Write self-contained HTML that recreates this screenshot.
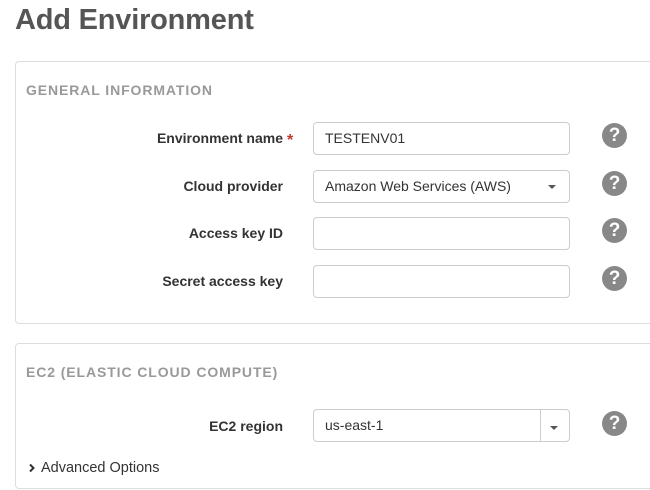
<!DOCTYPE html>
<html><head><style>
body{margin:0;width:650px;height:490px;background:#fff;font-family:"Liberation Sans",Arial,sans-serif;position:relative;overflow:hidden;color:#333}
.abs{position:absolute}
h1{position:absolute;left:15px;top:4px;margin:0;font-size:29px;font-weight:bold;color:#555;letter-spacing:-0.2px}
.panel{position:absolute;left:15px;width:660px;border:1px solid #ddd;border-radius:4px;background:#fff}
.hd{position:absolute;left:26px;font-size:14px;font-weight:bold;color:#999;letter-spacing:0.9px}
.lbl{position:absolute;right:367px;font-size:14px;font-weight:bold;color:#333;text-align:right;white-space:nowrap}
.inp{position:absolute;left:313px;width:255px;height:31px;border:1px solid #ccc;border-radius:4px;font-size:14px;line-height:31px;box-sizing:content-box;text-indent:11px;color:#333}
.help{position:absolute;left:602px;width:25px;height:25px;border-radius:50%;background:#888;color:#fff;font-weight:bold;font-size:19px;line-height:25px;text-align:center}
.caret{position:absolute;width:0;height:0;border-left:4px solid transparent;border-right:4px solid transparent;border-top:4px solid #555}
</style></head><body>
<h1>Add Environment</h1>
<div class="panel" style="top:61px;height:261px"></div>
<div class="hd" style="top:82px">GENERAL INFORMATION</div>

<div class="lbl" style="top:130px">Environment name</div>
<div class="abs" style="left:287px;top:132px;color:#c0392b;font-size:16px;font-weight:bold">*</div>
<div class="inp" style="top:122px">TESTENV01</div>
<div class="help" style="top:123px">?</div>

<div class="lbl" style="top:178px">Cloud provider</div>
<div class="inp" style="top:170px">Amazon Web Services (AWS)</div>
<div class="caret" style="left:548px;top:185px"></div>
<div class="help" style="top:171px">?</div>

<div class="lbl" style="top:225px">Access key ID</div>
<div class="inp" style="top:217px"></div>
<div class="help" style="top:218px">?</div>

<div class="lbl" style="top:273px">Secret access key</div>
<div class="inp" style="top:265px"></div>
<div class="help" style="top:266px">?</div>

<div class="panel" style="top:343px;height:144px"></div>
<div class="hd" style="top:364px">EC2 (ELASTIC CLOUD COMPUTE)</div>
<div class="lbl" style="top:418px">EC2 region</div>
<div class="inp" style="top:409px">us-east-1</div>
<div class="abs" style="left:540px;top:410px;width:1px;height:31px;background:#ccc"></div>
<div class="caret" style="left:550px;top:426px"></div>
<div class="help" style="top:411px">?</div>
<svg class="abs" style="left:28px;top:463px" width="8" height="10" viewBox="0 0 8 10"><path d="M2 1.5L5.5 5L2 8.5" stroke="#333" stroke-width="2" fill="none"/></svg>
<div class="abs" style="left:41px;top:460px;font-size:14.5px;color:#333">Advanced Options</div>
</body></html>
